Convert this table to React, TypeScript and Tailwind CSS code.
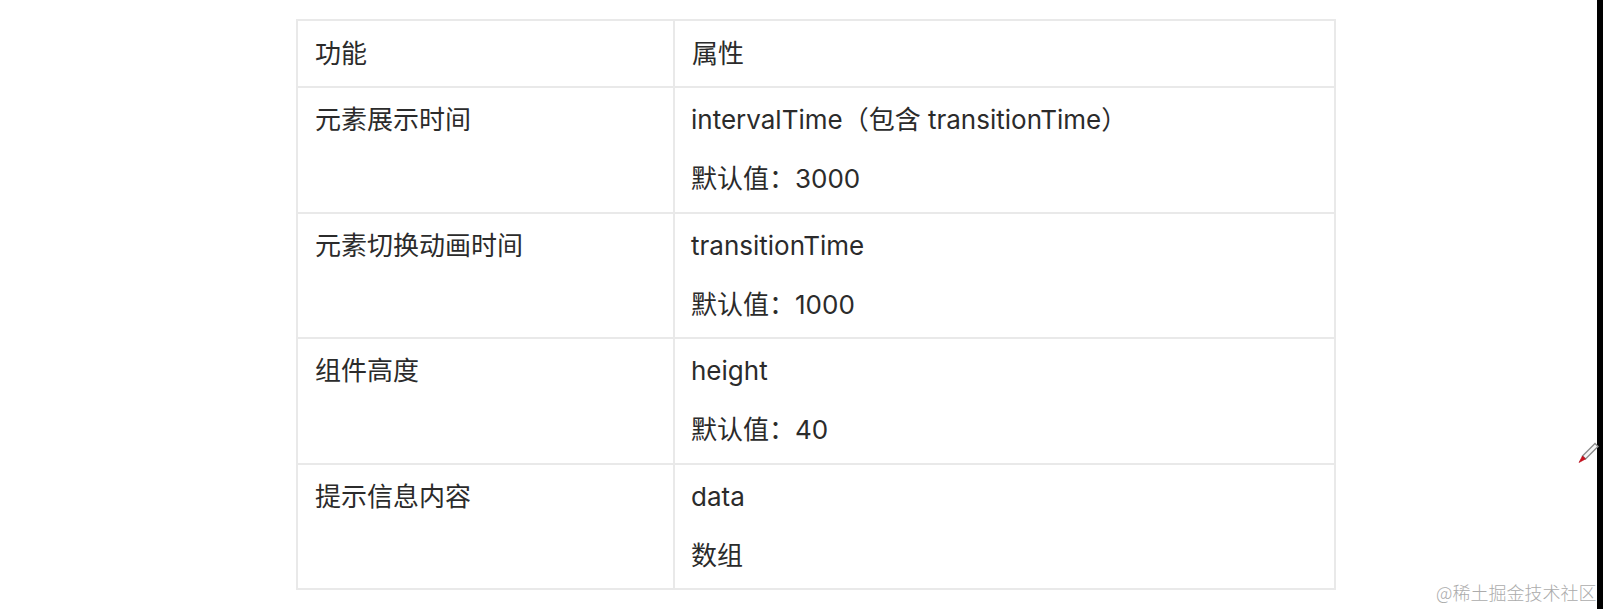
const rows = [
  { name: "元素展示时间", lines: ["intervalTime（包含 transitionTime）", "默认值：3000"], h: "h-[126px]" },
  { name: "元素切换动画时间", lines: ["transitionTime", "默认值：1000"], h: "h-[125px]" },
  { name: "组件高度", lines: ["height", "默认值：40"], h: "h-[126px]" },
  { name: "提示信息内容", lines: ["data", "数组"], h: "h-[125px]" },
];

function PencilCursor() {
  return (
    <svg width="22" height="22" viewBox="0 0 22 22" className="absolute left-[1577px] top-[442px]">
      <path d="M18 1.5 L21 4.5 L8.5 17 L5.5 14 Z" fill="#f6f6f6" stroke="#8c8c8c" strokeWidth="1.4" />
      <path d="M5.5 14 L8.5 17 L2 20.5 Z" fill="#d0101b" stroke="#b00010" strokeWidth="0.6" />
    </svg>
  );
}

export default function App() {
  return (
    <div className="relative flex h-[609px] w-[1603px] bg-white font-['Inter','Noto_Sans_CJK_SC',sans-serif] text-[#2b2b2b]">
      <div className="flex-1 pl-[296px] pt-[19px]">
        <div className="w-[1040px] border-2 border-[#e9e9e9]">
          <div className="grid h-[65px] grid-cols-[375px_1fr] text-[26px] leading-[36px]">
            <div className="pl-[17px] pt-[15px]">功能</div>
            <div className="border-l-2 border-[#e9e9e9] pl-[17px] pt-[15px]">属性</div>
          </div>
          {rows.map((row) => (
            <div key={row.name} className={`grid ${row.h} grid-cols-[375px_1fr] border-t-2 border-[#e9e9e9] text-[26px] leading-[36px]`}>
              <div className="pl-[17px] pt-[14px]">{row.name}</div>
              <div className="flex flex-col gap-[23px] border-l-2 border-[#e9e9e9] pl-[16px] pt-[14px]">
                {row.lines.map((line) => (
                  <p key={line}>{line}</p>
                ))}
              </div>
            </div>
          ))}
        </div>
      </div>
      <div className="w-[6px] bg-black" />
      <PencilCursor />
      <div className="absolute left-[1436px] top-[581px] font-['Noto_Sans_CJK_SC',sans-serif] text-[18px] font-light leading-[22px] text-[#ababab]">
        @稀土掘金技术社区
      </div>
    </div>
  );
}
